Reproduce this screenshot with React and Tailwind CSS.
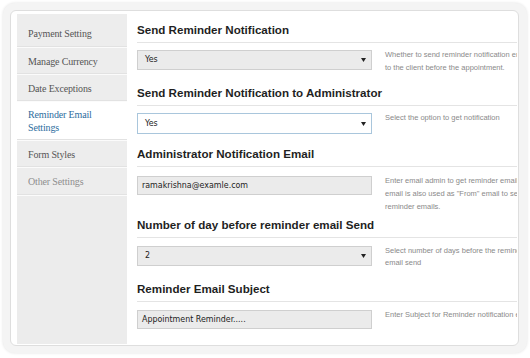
import React from "react";

const sideFont = { fontFamily: '"Liberation Serif", "Times New Roman", serif' };

function SideItem({ children, active, first, muted }) {
  return (
    <div
      className={
        "pl-[11px] pr-2 border-b border-[#fbfbfb] shadow-[inset_0_-1px_0_#e2e2e2] text-[10px] tracking-[-0.15px] " +
        (active
          ? "bg-white text-[#2d6d9e] leading-[13px] pt-[6px] pb-[6px]"
          : muted
          ? "bg-[#ededed] text-[#8d8d8d] leading-[13px] pt-[7px] pb-[7px]"
          : first
          ? "bg-[#ededed] text-[#555] leading-[13px] pt-[13px] pb-[7px]"
          : "bg-[#ededed] text-[#555] leading-[13px] pt-[7px] pb-[6px]")
      }
      style={sideFont}
    >
      {children}
    </div>
  );
}

function Heading({ children }) {
  return (
    <div className="border-b border-[#e4e4e4] pb-[5px]">
      <div className="font-['Liberation_Sans',Arial,sans-serif] font-bold text-[11.6px] leading-[14px] text-[#1f1f1f] whitespace-nowrap">
        {children}
      </div>
    </div>
  );
}

function Arrow() {
  return (
    <svg width="5" height="4" viewBox="0 0 5 4" className="shrink-0">
      <path d="M0 0 H5 L2.5 4 Z" fill="#222" />
    </svg>
  );
}

function Field({ kind, value, focused }) {
  const isSelect = kind === "select";
  return (
    <div
      className={
        "w-[235px] shrink-0 flex items-center justify-between border font-['DejaVu_Sans_Condensed','DejaVu_Sans',sans-serif] text-[8.8px] text-[#222] " +
        (focused
          ? "bg-white border-[#a9c6dc] h-[21px] pl-[7px] pr-[5px]"
          : isSelect
          ? "bg-[#ebebeb] border-[#cfcfcf] h-[20px] pl-[7px] pr-[5px]"
          : "bg-[#ebebeb] border-[#cfcfcf] h-[19px] pl-[4px] pr-[5px]")
      }
    >
      <span>{value}</span>
      {isSelect && <Arrow />}
    </div>
  );
}

function Section({ title, kind, value, focused, desc, gap, mt }) {
  return (
    <div className={gap}>
      <Heading>{title}</Heading>
      <div className={"flex items-start " + (mt || "mt-[7px]")}>
        <Field kind={kind} value={value} focused={focused} />
        <div className="ml-[13px] -mt-[1px] whitespace-nowrap font-['Liberation_Sans',Arial,sans-serif] text-[7.5px] leading-[12.7px] text-[#8a8a8a]">
          {desc}
        </div>
      </div>
    </div>
  );
}

export default function App() {
  return (
    <div className="w-[530px] h-[358px] bg-white pt-[3px] pl-[3px] pr-[3px] pb-[5px]">
      <div className="h-full rounded-[12px] bg-[#f4f4f4] shadow-[0_0_3px_rgba(0,0,0,0.12)] pt-[7px] pl-[7px] pr-[8px] pb-[7px]">
        <div className="h-full rounded-[6px] bg-white border border-[#dedede] flex pl-[6px] pt-[3px] pb-[1px] pr-[1px] overflow-hidden">
          <div className="w-[110px] shrink-0 bg-[#ececec] flex flex-col">
            <SideItem first>Payment Setting</SideItem>
            <SideItem>Manage Currency</SideItem>
            <SideItem>Date Exceptions</SideItem>
            <SideItem active>
              Reminder Email
              <br />
              Settings
            </SideItem>
            <SideItem>Form Styles</SideItem>
            <SideItem muted>Other Settings</SideItem>
            <div className="flex-1 bg-[#ececec]" />
          </div>
          <div className="flex-1 min-w-0 overflow-hidden ml-[10px] pt-[9px]">
            <Section
              title="Send Reminder Notification"
              kind="select"
              value="Yes"
              gap="mb-[12px]"
              desc={
                <>
                  Whether to send reminder notification email
                  <br />
                  to the client before the appointment.
                </>
              }
            />
            <Section
              title="Send Reminder Notification to Administrator"
              kind="select"
              value="Yes"
              focused
              gap="mb-[13px]"
              desc={<>Select the option to get notification</>}
            />
            <Section
              title="Administrator Notification Email"
              kind="input"
              value="ramakrishna@examle.com"
              gap="mb-[4px]"
              mt="mt-[9px]"
              desc={
                <>
                  Enter email admin to get reminder email. This
                  <br />
                  email is also used as "From" email to send
                  <br />
                  reminder emails.
                </>
              }
            />
            <Section
              title="Number of day before reminder email Send"
              kind="select"
              value="2"
              gap="mb-[12px]"
              mt="mt-[8px]"
              desc={
                <>
                  Select number of days before the reminder
                  <br />
                  email send
                </>
              }
            />
            <Section
              title="Reminder Email Subject"
              kind="input"
              value="Appointment Reminder....."
              gap=""
              mt="mt-[8px]"
              desc={<>Enter Subject for Reminder notification email</>}
            />
          </div>
        </div>
      </div>
    </div>
  );
}
